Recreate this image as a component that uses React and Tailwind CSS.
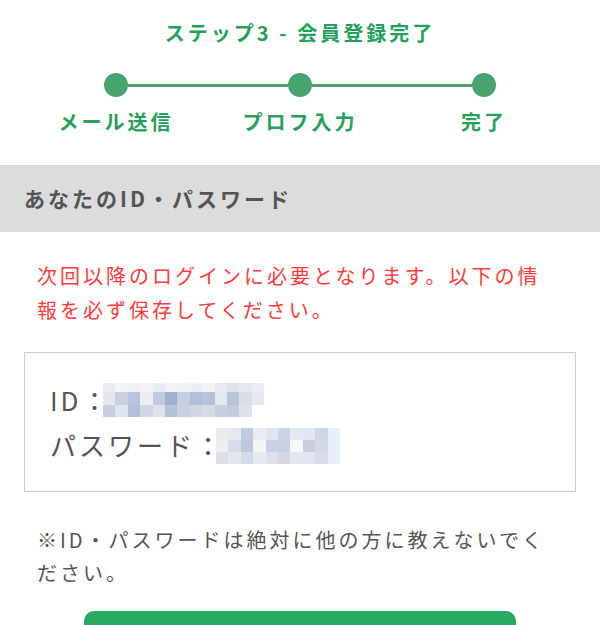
import React from 'react';

const idCells = [
  ['#e8ebf0', '#f4f5f8', '#f0f1f4', '#f2f3f6', '#e8ecf4', '#f0f2f6', '#eef0f4', '#eceff4', '#f4f5f7', '#e6e9f0', '#dde2ec', '#e4e8f0', '#eaedf3'],
  ['#e4e6ea', '#c8d0e2', '#b8c4dc', '#eceef2', '#c0cae0', '#9fb0d0', '#c6cfe2', '#b0bfdc', '#b8c2d6', '#e4e7ee', '#b8c4da', '#d8dde8', '#e4e8f2'],
  ['#c8d0e0', '#dfe3ec', '#b4c0da', '#cfd6e6', '#dde2ec', '#b8c2da', '#c8d0e2', '#d0d6e4', '#d4dae6', '#c8d0e0', '#c4cce0', '#dde1ea'],
];

const pwCells = [
  ['#e8eaee', '#e4e8f0', '#c0cbe0', '#e8ebf2', '#dfe4ee', '#ccd3e4', '#e4e8f0', '#dfe4ee', '#d0d6e6', '#e8eef8'],
  ['#eceef0', '#d4dcec', '#bcc8e0', '#f6f4f0', '#c8d0e4', '#c8d0e2', '#f4f6f8', '#c8cee0', '#d4d8e6', '#e8eef8'],
  ['#dcdfe6', '#e2e6ee', '#d4dae8', '#e4e8f0', '#dce0ec', '#d4d8e6', '#e4e6ee', '#e0e4ee', '#d8dce8', '#eaeef8'],
];

// pixelated "hidden" value
const Mosaic = ({ cells, rows, cell = 12.4 }) => {
  const width = Math.max(...cells.map((r) => r.length)) * cell;
  const height = rows.reduce((a, b) => a + b, 0);
  let y = 0;
  return (
    <svg width={width} height={height} shapeRendering="crispEdges" className="block">
      {cells.map((row, ri) => {
        const top = y;
        y += rows[ri];
        return row.map((c, ci) => (
          <rect key={`${ri}-${ci}`} x={ci * cell} y={top} width={cell + 0.5} height={rows[ri]} fill={c} />
        ));
      })}
    </svg>
  );
};

const steps = [
  { label: 'メール送信', left: false, right: true },
  { label: 'プロフ入力', left: true, right: true },
  { label: '完了', left: true, right: false },
];

const App = () => {
  return (
    <div className="w-[600px] min-h-[625px] bg-white font-['Noto_Sans_CJK_JP','Noto_Sans',sans-serif]">
      <h1 className="pt-[18px] text-center text-[20px] leading-[30px] font-bold tracking-[3px] text-[#23a05b]">
        ステップ3 - 会員登録完了
      </h1>

      <div className="mt-[25px] mx-auto grid w-[552px] grid-cols-3">
        {steps.map((s) => (
          <div key={s.label} className="flex flex-col items-center">
            <div className="flex h-[24px] w-full items-center">
              <div className={`h-[3px] flex-1 ${s.left ? 'bg-[#4ca670]' : ''}`} />
              <div className="h-[24px] w-[24px] rounded-full bg-[#48a36d]" />
              <div className={`h-[3px] flex-1 ${s.right ? 'bg-[#4ca670]' : ''}`} />
            </div>
            <div className="mt-[10px] text-[20px] leading-[30px] font-bold tracking-[3px] text-[#27a05c]">
              {s.label}
            </div>
          </div>
        ))}
      </div>

      <div className="mt-[28px] flex h-[67px] items-center border-t border-[#d2d2d2] bg-[#dcdcdc] px-6">
        <h2 className="text-[21px] font-bold tracking-[3px] text-[#555555]">あなたのID・パスワード</h2>
      </div>

      <p className="mt-[27px] px-[37px] text-[20px] leading-[34px] tracking-[3px] text-[#fa3c3c]">
        次回以降のログインに必要となります。以下の情
        <br />
        報を必ず保存してください。
      </p>

      <div className="mx-6 mt-[25px] border border-[#cccccc] px-[25px] py-6 text-[26px] leading-[45px] tracking-[3px] text-[#555555]">
        <div className="flex h-[45px] items-center">
          <span>ID：</span>
          <div className="-ml-2">
            <Mosaic cells={idCells} rows={[9, 13, 12]} />
          </div>
        </div>
        <div className="flex h-[45px] items-center">
          <span>パスワード：</span>
          <div className="-ml-2 mt-[3px]">
            <Mosaic cells={pwCells} rows={[12, 12, 12]} />
          </div>
        </div>
      </div>

      <p className="mt-[31px] px-[37px] text-[20px] leading-[33px] tracking-[3px] text-[#555555]">
        ※ID・パスワードは絶対に他の方に教えないでく
        <br />
        ださい。
      </p>

      <div className="mx-[84px] mt-[22px] h-[60px] rounded-[10px] bg-[#27ab62]" />
    </div>
  );
};

export default App;
